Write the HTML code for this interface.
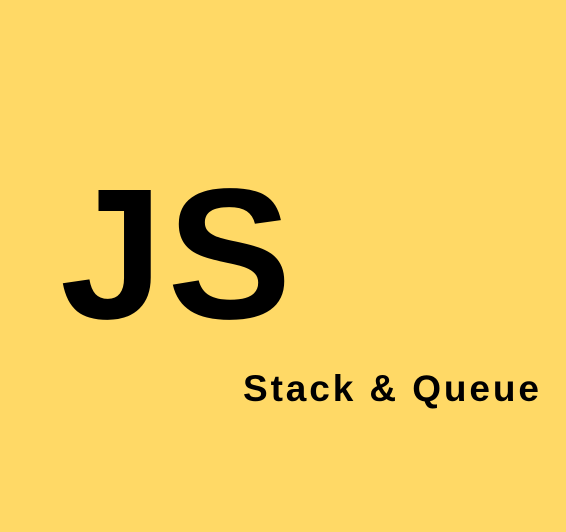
<!DOCTYPE html>
<html><head><style>
html,body{margin:0;padding:0}
body{width:566px;height:532px;background:#FFD966;position:relative;overflow:hidden}
.js{position:absolute;left:60px;top:162px;font:bold 186px/1 "Liberation Sans",sans-serif;color:#000;letter-spacing:4px;line-height:186px;height:186px}
.t{position:absolute;left:243px;top:367px;font:bold 37px/1.2 "Liberation Sans","Noto Sans CJK KR",sans-serif;color:#000;letter-spacing:2.9px;white-space:nowrap}
</style></head><body>
<div class="js">JS</div>
<div class="t">Stack &amp; Queue</div>
</body></html>
